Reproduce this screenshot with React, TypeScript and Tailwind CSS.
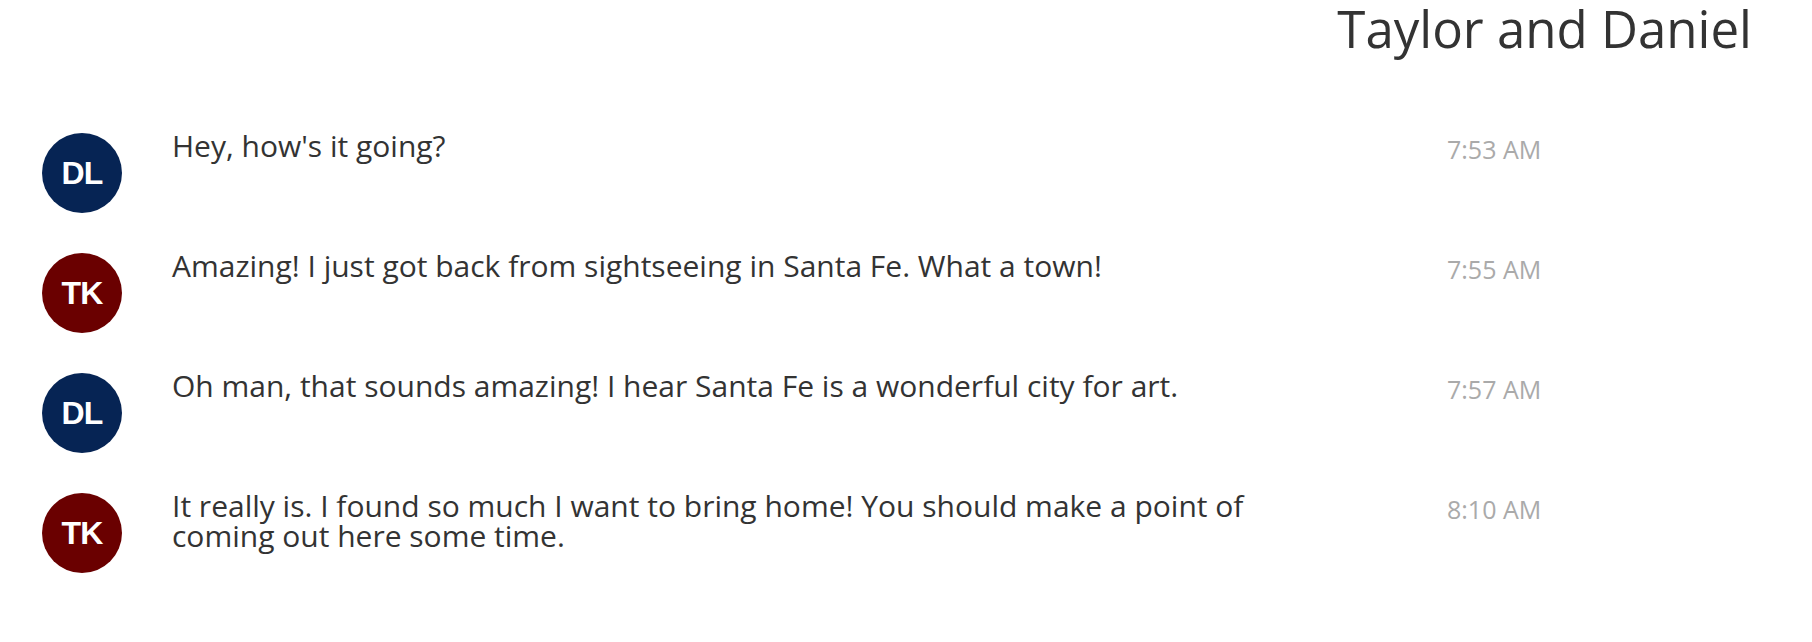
import React from "react";

type MessageType = {
  id: string;
  initials: string;
  color: string;
  text: string;
  time: string;
};

const MESSAGES: Array<MessageType> = [
  { id: "1", initials: "DL", color: "bg-[#062454]", text: "Hey, how's it going?", time: "7:53 AM" },
  {
    id: "2",
    initials: "TK",
    color: "bg-[#6a0000]",
    text: "Amazing! I just got back from sightseeing in Santa Fe. What a town!",
    time: "7:55 AM",
  },
  {
    id: "3",
    initials: "DL",
    color: "bg-[#062454]",
    text: "Oh man, that sounds amazing! I hear Santa Fe is a wonderful city for art.",
    time: "7:57 AM",
  },
  {
    id: "4",
    initials: "TK",
    color: "bg-[#6a0000]",
    text: "It really is. I found so much I want to bring home! You should make a point of coming out here some time.",
    time: "8:10 AM",
  },
];

const Message: React.FC<MessageType> = ({ initials, color, text, time }) => (
  <div className="flex items-start">
    <div
      className={`${color} mt-[5px] flex h-20 w-20 shrink-0 items-center justify-center rounded-full font-['Liberation_Sans',sans-serif] text-[32px] font-bold tracking-tight text-white`}
    >
      {initials}
    </div>
    <p className="ml-[50px] mt-[3px] w-[1090px] text-[30px] leading-[30px] text-[#333]">{text}</p>
    <span className="ml-[185px] mt-[6px] text-[25px] leading-[30px] text-[#aaa]">{time}</span>
  </div>
);

const App: React.FC = () => {
  return (
    <div className="h-[642px] w-[1812px] overflow-hidden bg-white font-['Open_Sans',sans-serif]">
      <div className="flex justify-end pr-[60px]">
        <h1 className="text-[51px] leading-[56px] text-[#333]">Taylor and Daniel</h1>
      </div>
      <div className="mt-[72px] flex flex-col gap-[35px] pl-[42px]">
        {MESSAGES.map((m) => (
          <Message key={m.id} {...m} />
        ))}
      </div>
    </div>
  );
};

export default App;
